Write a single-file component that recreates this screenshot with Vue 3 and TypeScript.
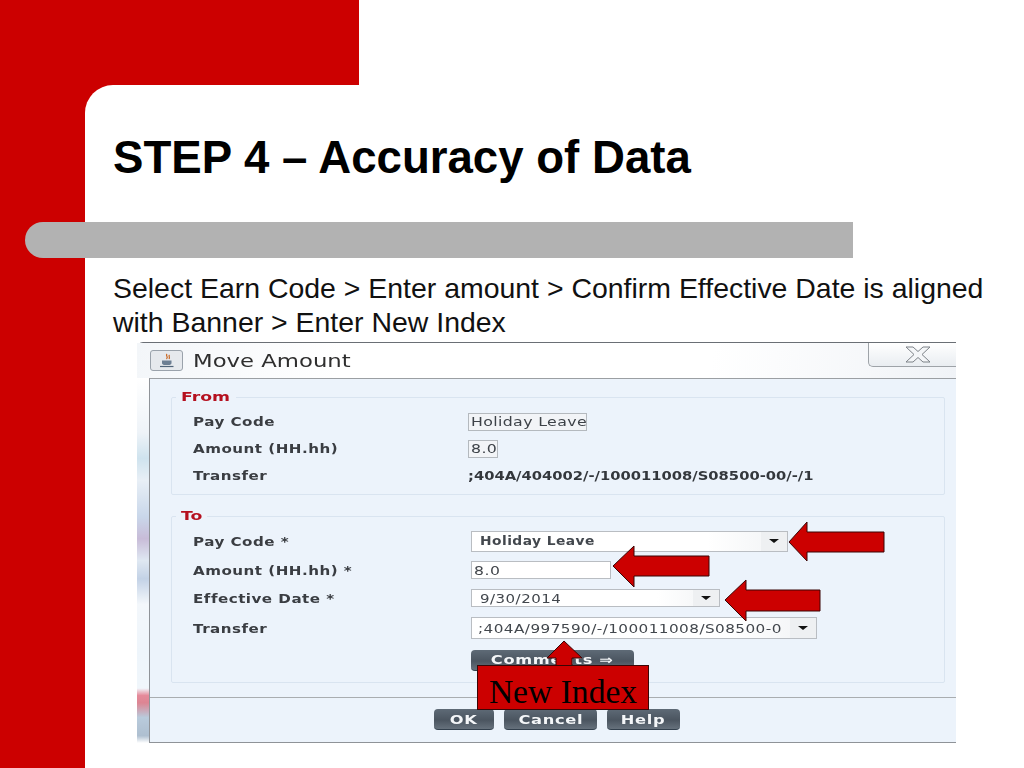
<script setup lang="ts">
const fromRows = [
  { label: 'Pay Code', value: 'Holiday Leave', cls: 'ro-box ro-leave' },
  { label: 'Amount (HH.hh)', value: '8.0', cls: 'ro-box ro-amount' },
  { label: 'Transfer', value: ';404A/404002/-/100011008/S08500-00/-/1', cls: 'ro-plain' },
]
const toRows = [
  { label: 'Pay Code *', value: 'Holiday Leave', cls: 'pay', kind: 'select' },
  { label: 'Amount (HH.hh) *', value: '8.0', cls: 'amount', kind: 'input' },
  { label: 'Effective Date *', value: '9/30/2014', cls: 'date', kind: 'select' },
  { label: 'Transfer', value: ';404A/997590/-/100011008/S08500-0', cls: 'transfer', kind: 'select' },
]
const arrows = [
  '789,542 807,522 807,532 884,532 884,552 807,552 807,561',
  '613,566 634,546 634,556 709,556 709,576 634,576 634,587',
  '725,600 746,580 746,590 820,590 820,611 746,611 746,621',
  '564,641 582,658 572,658 572,666 556,666 556,658 547,658',
]
const footerButtons = [
  { text: 'OK', cls: 'ok' },
  { text: 'Cancel', cls: 'cancel' },
  { text: 'Help', cls: 'help' },
]
</script>

<template>
  <div class="slide">
    <div class="top-red"></div>
    <div class="body">
      <main class="main">
        <h1 class="title">STEP 4 – Accuracy of Data</h1>
        <div class="bar"></div>
        <p class="lead">Select Earn Code &gt; Enter amount &gt; Confirm Effective Date is aligned<br />with Banner &gt; Enter New Index</p>

        <section class="dialog">
          <header class="titlebar">
            <span class="app-icon">
              <svg width="20" height="15" viewBox="0 0 20 15" fill="none">
                <path d="M10 1C8 3 12 3.500 9.500 6M12.500 2C11 3.500 13.500 4 12 6" stroke="#c8641e" stroke-width="1.200" />
                <path d="M5 7.500H14.500V10C14.500 11.500 13 12 11.500 12H8C6.500 12 5 11.500 5 10Z" fill="#6d7f93" />
                <path d="M3 13.500H16.500" stroke="#52657a" stroke-width="1.200" />
              </svg>
            </span>
            <span class="dialog-title">Move Amount</span>
            <span class="close">
              <svg width="28" height="17" viewBox="0 0 28 17" fill="#f4f6f8" stroke="#7d8288" stroke-width="1">
                <path d="M2 1H9L14 5.500L19 1H26L18 8.500L26 16H19L14 11.500L9 16H2L10 8.500Z" />
              </svg>
            </span>
          </header>
          <div class="frame">
            <div class="strip"></div>
            <div class="panel">
              <div class="sets">
                <fieldset class="set from">
                  <legend class="legend-from"><span>From</span></legend>
                  <div class="grid from-grid">
                    <template v-for="row in fromRows" :key="row.label">
                      <span class="label">{{ row.label }}</span>
                      <span :class="row.cls"><span class="value-text">{{ row.value }}</span></span>
                    </template>
                  </div>
                </fieldset>
                <fieldset class="set to">
                  <legend class="legend-to"><span>To</span></legend>
                  <div class="grid to-grid">
                    <template v-for="row in toRows" :key="row.cls">
                      <span class="label">{{ row.label }}</span>
                      <span class="control" :class="[row.cls, row.kind]">
                        <span class="control-text">{{ row.value }}</span>
                        <span v-if="row.kind === 'select'" class="caret"><i></i></span>
                      </span>
                    </template>
                    <span></span>
                    <button class="btn comments" type="button"><span>Comments ⇒</span></button>
                  </div>
                </fieldset>
              </div>
              <footer class="footer">
                <button v-for="b in footerButtons" :key="b.cls" class="btn" :class="b.cls" type="button"><span>{{ b.text }}</span></button>
              </footer>
            </div>
          </div>
        </section>
      </main>
    </div>

    <svg class="arrows" width="1024" height="768" viewBox="0 0 1024 768">
      <polygon v-for="(p, i) in arrows" :key="i" :points="p" fill="#cc0000" stroke="#3a0505" stroke-width="1" />
    </svg>
    <div class="new-index">New Index</div>
  </div>
</template>

<style>
html, body { margin: 0; background: #fff; }
</style>

<style scoped>
.slide {
  position: relative;
  width: 1024px;
  height: 768px;
  overflow: hidden;
  background: #fff;
  font-family: "Liberation Sans", Arial, sans-serif;
}
.top-red { width: 359px; height: 85px; background: #cc0000; }
.body { height: 683px; background: linear-gradient(90deg, #cc0000 0 200px, #fff 200px); }
.main {
  height: 100%;
  box-sizing: border-box;
  margin-left: 85px;
  padding: 46px 0 0 28px;
  background: #fff;
  border-top-left-radius: 28px;
}
.title {
  margin: 0;
  height: 54px;
  font-size: 45.600px;
  line-height: 54px;
  font-weight: 700;
  color: #000;
  white-space: nowrap;
}
.bar {
  width: 828px;
  height: 36px;
  margin: 37px 0 0 -88px;
  border-radius: 18px 0 0 18px;
  background: #b2b2b2;
}
.lead {
  margin: 13px 0 0;
  font-size: 28.440px;
  line-height: 34px;
  color: #111;
  white-space: nowrap;
}
.dialog {
  width: 819px;
  height: 401px;
  margin: 3px 0 0 24px;
  display: flex;
  flex-direction: column;
  border-top: 1px solid #6a6f75;
  border-top-left-radius: 6px;
  background: #fff;
  filter: blur(0.5px);
  font-family: "DejaVu Sans", sans-serif;
  box-sizing: border-box;
}
.titlebar {
  height: 35px;
  flex: none;
  display: flex;
  align-items: center;
  padding-left: 13px;
  background: linear-gradient(100deg, #f3f6f9 0, #fff 25%, #fff 70%, #f0f3f7 100%);
}
.app-icon {
  width: 31px;
  height: 19px;
  display: flex;
  align-items: center;
  justify-content: center;
  border: 1px solid #9aa2ab;
  border-radius: 3px;
  background: #e6e9ed;
}
.dialog-title {
  margin-left: 10px;
  font-size: 17.500px;
  color: #2e2e2e;
  white-space: nowrap;
  transform: scaleX(1.3);
  transform-origin: left center;
}
.close {
  margin-left: auto;
  align-self: flex-start;
  width: 88px;
  height: 24px;
  box-sizing: border-box;
  padding: 3px 0 0 35px;
  border-left: 1px solid #9ea3a8;
  border-bottom: 1px solid #9ea3a8;
  border-bottom-left-radius: 5px;
  background: linear-gradient(180deg, #fff, #e9edf1);
}
.close svg { display: block; }
.frame { flex: 1; display: flex; min-height: 0; }
.strip {
  width: 12px;
  flex: none;
  background: linear-gradient(180deg,
    #fff 0, #eef3f8 15%, #cfe3ee 22%, #e8eff6 28%, #c9d7ea 38%, #c8bcd8 44%, #dfe8f2 50%,
    #c3d2e6 55%, #f3f7fb 62%, #eef5fb 75%, #f0f6fb 85%, #e58a9a 87%, #dd8593 89%, #b9cbdc 93%, #aebfd0 98%, #fff 100%);
}
.panel {
  flex: 1;
  min-width: 0;
  display: flex;
  flex-direction: column;
  border-top: 1px solid #9b9fa3;
  border-left: 1px solid #8f9398;
  border-bottom: 1px solid #8f9398;
  background: #ecf3fb;
}
.sets {
  padding: 11px 11px 0 21px;
  display: flex;
  flex-direction: column;
  gap: 14px;
}
.set {
  margin: 0;
  padding: 0;
  border: 1px solid #d9e4f0;
  border-radius: 2px;
  min-width: 0;
}
.from { height: 105px; box-sizing: border-box; }
.to { height: 174px; box-sizing: border-box; }
legend {
  box-sizing: border-box;
  margin-left: 4px;
  padding: 0 0 0 5px;
  font-size: 11.500px;
  line-height: 14px;
  font-weight: 700;
  color: #b5101f;
}
legend span {
  display: inline-block;
  transform: scaleX(1.5);
  transform-origin: left center;
}
.legend-from { width: 60px; }
.legend-to { width: 31px; }
.grid { display: grid; align-items: center; justify-items: start; padding-left: 21px; }
.from-grid {
  padding-top: 4px;
  grid-template-columns: 275px 1fr;
  grid-auto-rows: 27px;
}
.to-grid {
  padding-top: 3px;
  grid-template-columns: 278px 1fr;
  grid-template-rows: 30px 28px 28px 32px 32px;
}
.label {
  display: inline-block;
  font-size: 12.500px;
  font-weight: 700;
  letter-spacing: 0.400px;
  color: #3a3d42;
  white-space: nowrap;
  transform: scaleX(1.21);
  transform-origin: left center;
}
.value-text {
  display: inline-block;
  transform-origin: left center;
  white-space: nowrap;
}
.ro-box {
  box-sizing: border-box;
  height: 18px;
  padding-left: 2px;
  line-height: 16px;
  font-size: 12.500px;
  color: #3d4248;
  letter-spacing: 0.300px;
  border: 1px solid #b4b9be;
  background: #f2f4f7;
}
.ro-leave { width: 119px; }
.ro-amount { width: 30px; }
.ro-box .value-text { transform: scaleX(1.26); }
.ro-plain {
  font-size: 12.500px;
  font-weight: 700;
  color: #33373c;
}
.ro-plain .value-text { transform: scaleX(1.18); }
.control {
  box-sizing: border-box;
  display: flex;
  align-items: center;
  padding-left: 8px;
  border: 1px solid #b9bdc2;
  background: linear-gradient(90deg, #fff 75%, #f1f3f5);
  font-size: 12.500px;
  color: #42474d;
  letter-spacing: 0.400px;
  white-space: nowrap;
}
.control-text { flex: 1; display: inline-block; transform-origin: left center; }
.pay { width: 317px; height: 21px; font-weight: 700; font-size: 12px; }
.pay .control-text { transform: scaleX(1.15); }
.amount { width: 140px; height: 18px; padding-left: 2px; background: #fff; }
.amount .control-text { transform: scaleX(1.25); }
.date { width: 249px; height: 18px; }
.date .control-text { transform: scaleX(1.2); }
.transfer { width: 346px; height: 22px; padding-left: 6px; }
.transfer .control-text { transform: scaleX(1.22); letter-spacing: 0.350px; }
.caret {
  width: 26px;
  align-self: stretch;
  flex: none;
  display: flex;
  align-items: center;
  justify-content: center;
  background: #eef0f2;
}
.caret i {
  width: 0;
  height: 0;
  border-left: 5px solid transparent;
  border-right: 5px solid transparent;
  border-top: 4px solid #111;
}
.btn {
  box-sizing: border-box;
  height: 21px;
  padding: 0;
  border: 0;
  border-bottom: 1px solid #33404d;
  border-radius: 4px;
  background: linear-gradient(180deg, #5e6a76 0, #4b5560 55%, #66717c 100%);
  color: #f4f6f8;
  font-family: "DejaVu Sans", sans-serif;
  font-size: 12.500px;
  font-weight: 700;
  letter-spacing: 0.500px;
}
.btn span { display: inline-block; transform: scaleX(1.3); white-space: nowrap; }
.comments { width: 163px; }
.footer {
  margin-top: 14px;
  flex: 1;
  display: flex;
  gap: 10px;
  padding: 11px 0 0 284px;
  border-top: 1px solid #a9adb0;
}
.ok { width: 60px; }
.cancel { width: 93px; }
.help { width: 73px; }
.arrows { position: absolute; left: 0; top: 0; pointer-events: none; }
.new-index {
  position: absolute;
  left: 477px;
  top: 665px;
  width: 172px;
  height: 45px;
  box-sizing: border-box;
  border: 1px solid #3a0505;
  background: #cc0000;
  color: #000;
  font-family: "Liberation Serif", serif;
  font-size: 33.600px;
  line-height: 52px;
  text-align: center;
  white-space: nowrap;
}
</style>
